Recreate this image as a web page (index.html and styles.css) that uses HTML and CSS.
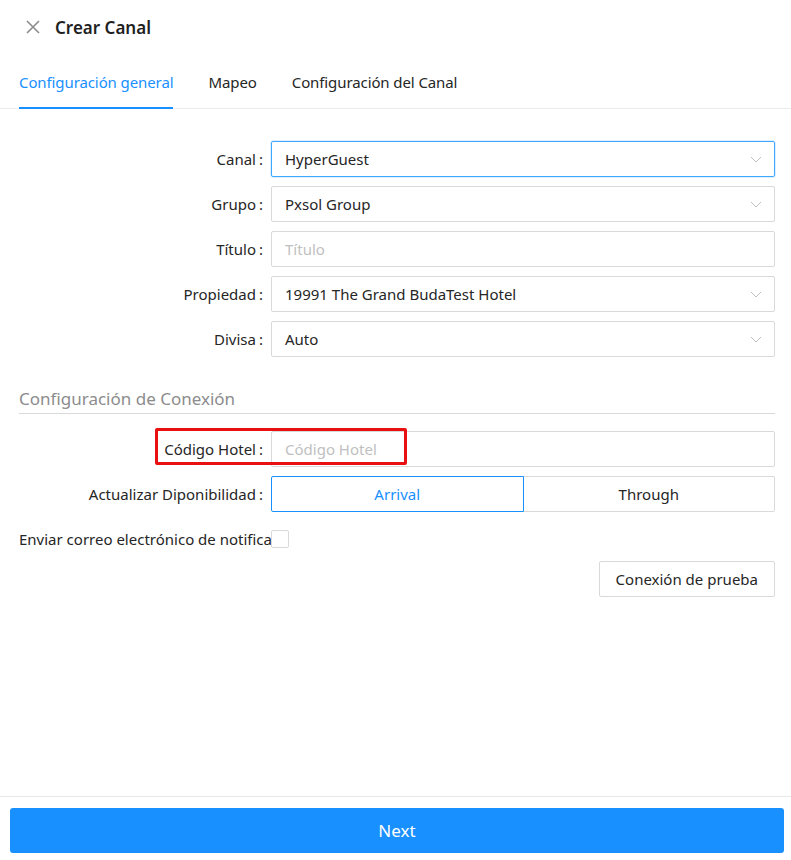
FILE: index.html
```html
<!DOCTYPE html>
<html lang="es">
<head>
<meta charset="utf-8">
<title>Crear Canal</title>
<link rel="stylesheet" href="styles.css">
</head>
<body>
<div class="drawer">
  <header class="head">
    <span class="close">
      <svg width="14" height="14" viewBox="0 0 14 14"><path d="M1 1L13 13M13 1L1 13" stroke="#8c8c8c" stroke-width="1.6" fill="none"/></svg>
    </span>
    <h1 class="title">Crear Canal</h1>
  </header>
  <nav class="tabs">
    <span class="tab active">Configuración general</span>
    <span class="tab">Mapeo</span>
    <span class="tab">Configuración del Canal</span>
  </nav>
  <main class="body">
    <div class="row">
      <label class="lbl">Canal</label>
      <div class="ctl"><div class="input select focused"><span>HyperGuest</span><svg class="arrow" width="12" height="12" viewBox="0 0 12 12"><path d="M1 4l5 5 5-5" stroke="#bfbfbf" stroke-width="1" fill="none"/></svg></div></div>
    </div>
    <div class="row">
      <label class="lbl">Grupo</label>
      <div class="ctl"><div class="input select"><span>Pxsol Group</span><svg class="arrow" width="12" height="12" viewBox="0 0 12 12"><path d="M1 4l5 5 5-5" stroke="#bfbfbf" stroke-width="1" fill="none"/></svg></div></div>
    </div>
    <div class="row">
      <label class="lbl">Título</label>
      <div class="ctl"><div class="input"><span class="ph">Título</span></div></div>
    </div>
    <div class="row">
      <label class="lbl">Propiedad</label>
      <div class="ctl"><div class="input select"><span>19991 The Grand BudaTest Hotel</span><svg class="arrow" width="12" height="12" viewBox="0 0 12 12"><path d="M1 4l5 5 5-5" stroke="#bfbfbf" stroke-width="1" fill="none"/></svg></div></div>
    </div>
    <div class="row">
      <label class="lbl">Divisa</label>
      <div class="ctl"><div class="input select"><span>Auto</span><svg class="arrow" width="12" height="12" viewBox="0 0 12 12"><path d="M1 4l5 5 5-5" stroke="#bfbfbf" stroke-width="1" fill="none"/></svg></div></div>
    </div>

    <h2 class="section">Configuración de Conexión</h2>

    <div class="row marked">
      <label class="lbl">Código Hotel</label>
      <div class="ctl"><div class="input"><span class="ph">Código Hotel</span></div></div>
      <span class="mark"></span>
    </div>
    <div class="row">
      <label class="lbl">Actualizar Diponibilidad</label>
      <div class="ctl">
        <div class="radios">
          <span class="rbtn on">Arrival</span>
          <span class="rbtn">Through</span>
        </div>
      </div>
    </div>
    <div class="row check">
      <label class="lbl left">Enviar correo electrónico de notificaciones</label>
      <div class="ctl"><span class="box"></span></div>
    </div>
    <div class="actions">
      <button class="btn">Conexión de prueba</button>
    </div>
  </main>
  <footer class="foot">
    <button class="next">Next</button>
  </footer>
</div>
</body>
</html>
```
FILE: styles.css
```css
* { box-sizing: border-box; }
html, body { margin: 0; padding: 0; background: #fff; }
body {
  font-family: "Noto Sans", "Open Sans", sans-serif;
  font-size: 15px;
  color: #262626;
}
.drawer {
  width: 791px;
  height: 860px;
  display: flex;
  flex-direction: column;
}
.head {
  display: flex;
  align-items: center;
  height: 54px;
  padding: 0 0 0 26px;
}
.close { display: flex; width: 14px; height: 14px; margin-right: 15px; }
.title {
  margin: 0;
  font-size: 17px;
  font-weight: 600;
  color: #1f1f1f;
}
.tabs {
  display: flex;
  gap: 35px;
  padding: 0 19px;
  border-bottom: 1px solid #ebebeb;
  height: 55px;
  align-items: stretch;
}
.tab {
  display: flex;
  align-items: center;
  padding-top: 3px;
  font-size: 15px;
  letter-spacing: -0.1px;
  color: #262626;
  border-bottom: 2px solid transparent;
  margin-bottom: -1px;
}
.tab.active { color: #1890ff; border-bottom-color: #1890ff; }
.body {
  flex: 1;
  padding: 32px 16px 0 19px;
}
.row {
  display: flex;
  align-items: center;
  height: 36px;
  margin-bottom: 9px;
  position: relative;
}
.lbl {
  width: 252px;
  flex: none;
  text-align: right;
  padding-right: 8px;
  white-space: nowrap;
  overflow: hidden;
  color: #262626;
}
.lbl::after { content: ":"; margin-left: 3px; }
.lbl.left { text-align: left; padding-right: 0; }
.lbl.left::after { content: ""; }
.ctl { flex: 1; min-width: 0; }
.input {
  height: 36px;
  border: 1px solid #d9d9d9;
  border-radius: 2px;
  display: flex;
  align-items: center;
  padding: 0 12px 0 13px;
}
.input.focused { border-color: #40a9ff; box-shadow: 0 0 0 1px rgba(24,144,255,.15); }
.input span { flex: 1; }
.ph { color: #bfbfbf; }
.arrow { flex: none; }
.section {
  margin: 30px 0 17px;
  font-size: 17px;
  font-weight: 400;
  color: #8c8c8c;
  padding-bottom: 2px;
  border-bottom: 1px solid #d9d9d9;
  line-height: 24px;
}
.mark {
  position: absolute;
  left: 136px;
  top: -3px;
  width: 252px;
  height: 37px;
  border: 3px solid #e81010;
  border-radius: 2px;
  pointer-events: none;
}
.radios { display: flex; height: 36px; }
.rbtn {
  flex: 1;
  display: flex;
  align-items: center;
  justify-content: center;
  border: 1px solid #d9d9d9;
  color: #262626;
}
.rbtn + .rbtn { border-left: none; }
.rbtn:first-child { border-radius: 2px 0 0 2px; }
.rbtn:last-child { border-radius: 0 2px 2px 0; }
.rbtn.on { color: #1890ff; border-color: #1890ff; }
.row.check { height: 20px; margin-top: 17px; margin-bottom: 0; }
.box {
  display: block;
  width: 18px;
  height: 18px;
  border: 1px solid #d9d9d9;
  border-radius: 2px;
}
.actions {
  display: flex;
  justify-content: flex-end;
  margin-top: 12px;
}
.btn {
  height: 36px;
  padding: 0 16px;
  font: inherit;
  color: #262626;
  background: #fff;
  border: 1px solid #d9d9d9;
  border-radius: 2px;
}
.foot {
  border-top: 1px solid #e8e8e8;
  padding: 11px 7px 7px 10px;
}
.next {
  display: block;
  width: 100%;
  height: 45px;
  font: inherit;
  font-size: 17px;
  color: #fff;
  background: #1890ff;
  border: none;
  border-radius: 3px;
}
```
